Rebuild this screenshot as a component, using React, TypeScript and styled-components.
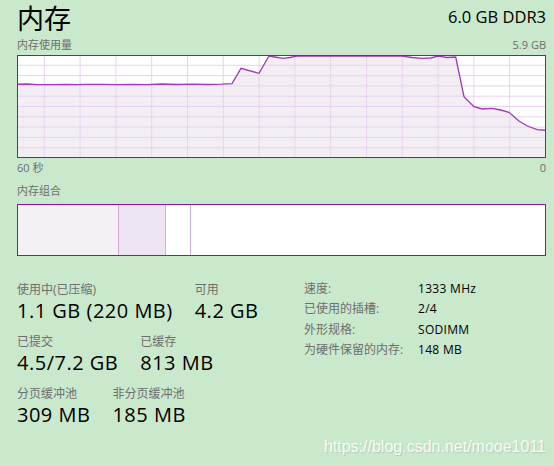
import * as React from 'react';
import styled, { createGlobalStyle } from 'styled-components';

const GlobalStyle = createGlobalStyle`
  html, body {
    margin: 0;
    padding: 0;
    background: #cae8cc;
  }
  body {
    font-family: 'Open Sans', 'Noto Sans CJK SC', sans-serif;
    color: #000;
  }
`;

// chart geometry (local px inside the 529x103 box)
const CHART_W = 529;
const CHART_H = 103;

const linePoints: [number, number][] = [
  [0, 29.3], [10, 29], [20, 29.7], [35, 29.7], [50, 29.3], [60, 29.7], [70, 29.3],
  [85, 29.3], [100, 29.7], [115, 29.3], [130, 29.7], [145, 29], [160, 29.5],
  [175, 29.2], [190, 29.5], [205, 29.2], [215, 28.7], [224, 13.3], [242, 18.3],
  [252, 1], [258, 2], [266, 3.3], [273, 2.5], [280, 1], [385, 1], [395, 2.5],
  [405, 3.3], [413.7, 3], [421, 1], [430, 2.5], [438.7, 2], [447, 41.7],
  [457, 51.7], [465.3, 54], [475.3, 53.3], [483.7, 55], [492, 57.3], [502, 66],
  [510.3, 71], [520.3, 74.7], [529, 75.3],
];

const verticals = Array.from({ length: 15 }, (_, i) => 27.3 + i * 35.8).filter((x) => x < CHART_W);
const horizontals = Array.from({ length: 9 }, (_, i) => (i + 1) * 10.3);

const UsageChart = () => {
  const line = linePoints.map(([x, y]) => `${x},${y}`).join(' ');
  const area = `0,${CHART_H} ${line} ${CHART_W},${CHART_H}`;
  return (
    <ChartBox>
      <svg width={CHART_W - 2} height={CHART_H - 2} viewBox={`1 1 ${CHART_W - 2} ${CHART_H - 2}`}>
        <rect x={0} y={0} width={CHART_W} height={CHART_H} fill="#ffffff" />
        <polygon points={area} fill="#f2eef4" />
        {verticals.map((x) => (
          <line key={`v${x}`} x1={x} y1={0} x2={x} y2={CHART_H} stroke="#e8d3ee" strokeWidth={1} />
        ))}
        {horizontals.map((y) => (
          <line key={`h${y}`} x1={0} y1={y} x2={CHART_W} y2={y} stroke="#e8d3ee" strokeWidth={1} />
        ))}
        <polyline points={line} fill="none" stroke="#9c3ab8" strokeWidth={1.3} />
      </svg>
    </ChartBox>
  );
};

const segments = [
  { width: 100, color: '#f4f0f5' },
  { width: 46, color: '#eee5f2' },
  { width: 24, color: '#ffffff' },
];

const leftRows = [
  [
    { label: '使用中(已压缩)', value: '1.1 GB (220 MB)' },
    { label: '可用', value: '4.2 GB' },
  ],
  [
    { label: '已提交', value: '4.5/7.2 GB' },
    { label: '已缓存', value: '813 MB' },
  ],
  [
    { label: '分页缓冲池', value: '309 MB' },
    { label: '非分页缓冲池', value: '185 MB' },
  ],
];

const specs = [
  { label: '速度:', value: '1333 MHz' },
  { label: '已使用的插槽:', value: '2/4' },
  { label: '外形规格:', value: 'SODIMM' },
  { label: '为硬件保留的内存:', value: '148 MB' },
];

export default function App() {
  return (
    <Page>
      <GlobalStyle />
      <Header>
        <Title>内存</Title>
        <Spec>6.0 GB DDR3</Spec>
      </Header>
      <LabelRow>
        <span>内存使用量</span>
        <span>5.9 GB</span>
      </LabelRow>
      <UsageChart />
      <AxisRow>
        <span>60 秒</span>
        <span>0</span>
      </AxisRow>
      <SectionLabel>内存组合</SectionLabel>
      <CompositionBar>
        {segments.map((s, i) => (
          <Segment key={i} $color={s.color} style={{ width: s.width }} />
        ))}
        <Segment $color="#ffffff" $grow />
      </CompositionBar>
      <Stats>
        <LeftStats>
          {leftRows.map((row, i) => (
            <StatRow key={i}>
              {row.map((item) => (
                <Stat key={item.label}>
                  <StatLabel>{item.label}</StatLabel>
                  <StatValue>{item.value}</StatValue>
                </Stat>
              ))}
            </StatRow>
          ))}
        </LeftStats>
        <SpecTable>
          {specs.map((s) => (
            <SpecRow key={s.label}>
              <SpecLabel>{s.label}</SpecLabel>
              <SpecValue>{s.value}</SpecValue>
            </SpecRow>
          ))}
        </SpecTable>
      </Stats>
      <Watermark>https://blog.csdn.net/mooe1011</Watermark>
    </Page>
  );
}

//Styled Components
const Page = styled.div`
  width: 554px;
  height: 466px;
  box-sizing: border-box;
  padding: 0 8px 0 17px;
  display: flex;
  flex-direction: column;
  overflow: hidden;
`;

const Header = styled.div`
  display: flex;
  justify-content: space-between;
  align-items: flex-end;
  height: 33px;
`;

const Title = styled.div`
  font-size: 27px;
  line-height: 31px;
  font-family: 'Noto Sans CJK SC', sans-serif;
`;

const Spec = styled.div`
  font-size: 16.5px;
  line-height: 20px;
  margin-bottom: 6px;
`;

const LabelRow = styled.div`
  display: flex;
  justify-content: space-between;
  font-size: 11px;
  line-height: 16px;
  height: 16px;
  color: #6e6e6e;
  margin-top: 4px;
  margin-bottom: 2px;
`;

const ChartBox = styled.div`
  width: 529px;
  height: 103px;
  box-sizing: border-box;
  border: 1px solid #8b12ae;
  background: #fff;
  svg {
    display: block;
  }
`;

const AxisRow = styled(LabelRow)`
  margin-top: 2px;
  margin-bottom: 0;
`;

const SectionLabel = styled.div`
  font-size: 11px;
  line-height: 16px;
  color: #6e6e6e;
  margin-top: 7px;
`;

const CompositionBar = styled.div`
  display: flex;
  width: 529px;
  height: 52px;
  box-sizing: border-box;
  border: 1px solid #8b12ae;
  margin-top: 5px;
  background: #fff;
`;

const Segment = styled.div<{ $color: string; $grow?: boolean }>`
  background: ${({ $color }) => $color};
  flex: ${({ $grow }) => ($grow ? '1' : '0 0 auto')};
  border-right: ${({ $grow }) => ($grow ? 'none' : '1px solid #d3aadd')};
`;

const Stats = styled.div`
  display: flex;
  margin-top: 26px;
`;

const LeftStats = styled.div`
  width: 287px;
  display: flex;
  flex-direction: column;
  gap: 10px;
`;

const StatRow = styled.div`
  display: flex;
  gap: 22px;
`;

const Stat = styled.div`
  display: flex;
  flex-direction: column;
`;

const StatLabel = styled.div`
  font-size: 12px;
  line-height: 16px;
  color: #6e6e6e;
`;

const StatValue = styled.div`
  font-size: 20px;
  line-height: 26px;
  letter-spacing: 0.5px;
`;

const SpecTable = styled.div`
  display: flex;
  flex-direction: column;
  margin-top: -3px;
`;

const SpecRow = styled.div`
  display: flex;
  font-size: 12px;
  line-height: 20.3px;
`;

const SpecLabel = styled.div`
  width: 114px;
  color: #6e6e6e;
`;

const SpecValue = styled.div`
  color: #000;
  letter-spacing: 0.3px;
`;

const Watermark = styled.div`
  margin-top: auto;
  margin-bottom: 10px;
  align-self: flex-end;
  font-family: 'Liberation Sans', sans-serif;
  font-size: 16px;
  color: rgba(255, 255, 255, 0.9);
  text-shadow: 1px 1px 1px rgba(0, 0, 0, 0.12);
`;
